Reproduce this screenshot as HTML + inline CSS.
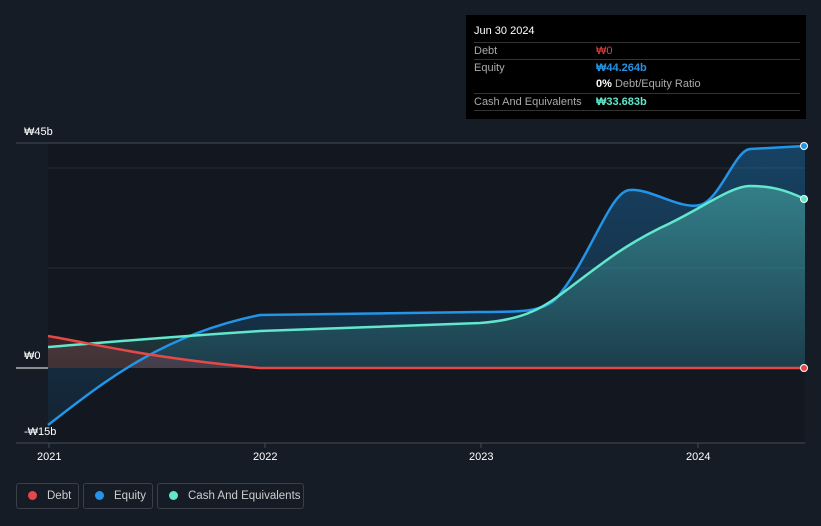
<!DOCTYPE html><html><head><style>
body{margin:0;width:821px;height:526px;background:#161c26;font-family:"Liberation Sans",sans-serif;overflow:hidden;position:relative}
.tt{position:absolute;left:466px;top:15px;width:340px;height:104px;background:#000;color:#fff;font-size:11px}
.row{position:absolute;left:8px;right:6px;height:17px;border-top:1px solid #333;color:#aaa;line-height:16px}
.row span{position:absolute;left:122px}
.leg{position:absolute;top:483px;height:26px;border:1px solid #3a3f48;border-radius:3px;color:#ccc;font-size:11.5px;line-height:24px;box-sizing:border-box;white-space:nowrap}
.leg i{display:inline-block;width:9px;height:9px;border-radius:50%;margin:0 10px 0 11px;vertical-align:-1px}
</style></head><body>
<svg width="821" height="526" style="position:absolute;left:0;top:0">
<defs><linearGradient id="g" x1="0" y1="0" x2="0" y2="1"><stop offset="0" stop-color="#1e90e0" stop-opacity=".35"/><stop offset="1" stop-color="#1e90e0" stop-opacity=".1"/></linearGradient>
<linearGradient id="c" x1="0" y1="0" x2="0" y2="1"><stop offset="0" stop-color="#5ee0c8" stop-opacity=".4"/><stop offset="1" stop-color="#5ee0c8" stop-opacity=".1"/></linearGradient></defs>
<rect x="48" y="143" width="757" height="300" fill="#131820"/>
<line x1="16" y1="143" x2="805" y2="143" stroke="#444c56"/>
<line x1="48" y1="168" x2="805" y2="168" stroke="#262c36"/>
<line x1="48" y1="268" x2="805" y2="268" stroke="#262c36"/>
<line x1="16" y1="443" x2="805" y2="443" stroke="#444c56"/>
<path d="M48,425 C100,385 160,335 260,315 L480,312 C520,312 540,312 555,300 C590,260 610,190 630,190 C650,188 680,210 700,205 C720,200 735,150 750,149 L805,146 L805,368 L48,368Z" fill="url(#g)"/>
<path d="M48,347 C100,343 150,338 260,331 L480,323 C520,320 540,310 560,295 C600,265 620,248 660,228 C700,210 730,186 750,186 C780,186 795,195 805,199 L805,368 L48,368Z" fill="url(#c)"/>
<path d="M48,336 C100,345 150,358 260,368 L48,368Z" fill="#e04848" fill-opacity=".2"/>
<path d="M48,425 C100,385 160,335 260,315 L480,312 C520,312 540,312 555,300 C590,260 610,190 630,190 C650,188 680,210 700,205 C720,200 735,150 750,149 L805,146" fill="none" stroke="#2394e6" stroke-width="2.5"/>
<path d="M48,347 C100,343 150,338 260,331 L480,323 C520,320 540,310 560,295 C600,265 620,248 660,228 C700,210 730,186 750,186 C780,186 795,195 805,199" fill="none" stroke="#62e6cc" stroke-width="2.5"/>
<path d="M48,336 C100,345 150,358 260,368 L805,368" fill="none" stroke="#e64848" stroke-width="2.5"/>
<line x1="16" y1="368" x2="48" y2="368" stroke="#fff"/>
<circle cx="804" cy="146" r="3.5" fill="#2394e6" stroke="#fff"/><circle cx="804" cy="199" r="3.5" fill="#62e6cc" stroke="#fff"/><circle cx="804" cy="368" r="3.5" fill="#e64848" stroke="#fff"/>
<g fill="#fff" font-size="11" font-family="Liberation Sans"><text x="24" y="135">₩45b</text><text x="24" y="359">₩0</text><text x="24" y="435">-₩15b</text>
<text x="37" y="460">2021</text><text x="253" y="460">2022</text><text x="469" y="460">2023</text><text x="686" y="460">2024</text></g>
<g stroke="#444c56"><line x1="49" y1="443" x2="49" y2="448"/><line x1="265" y1="443" x2="265" y2="448"/><line x1="481" y1="443" x2="481" y2="448"/><line x1="698" y1="443" x2="698" y2="448"/></g>
</svg>
<div class="tt"><div style="position:absolute;left:8px;top:10px">Jun 30 2024</div>
<div class="row" style="top:27px">Debt<span style="color:#e64040">₩0</span></div>
<div class="row" style="top:44px">Equity<span style="color:#2394e6;font-weight:bold">₩44.264b</span></div>
<div class="row" style="top:61px;border:0"><span style="color:#aaa"><b style="color:#fff">0%</b> Debt/Equity Ratio</span></div>
<div class="row" style="top:78px">Cash And Equivalents<span style="color:#62e6cc;font-weight:bold">₩33.683b</span></div>
<div class="row" style="top:95px;height:0"></div></div>
<div class="leg" style="left:16px;width:63px"><i style="background:#e64848"></i>Debt</div>
<div class="leg" style="left:83px;width:70px"><i style="background:#2394e6"></i>Equity</div>
<div class="leg" style="left:157px;width:147px"><i style="background:#62e6cc"></i>Cash And Equivalents</div>
</body></html>
